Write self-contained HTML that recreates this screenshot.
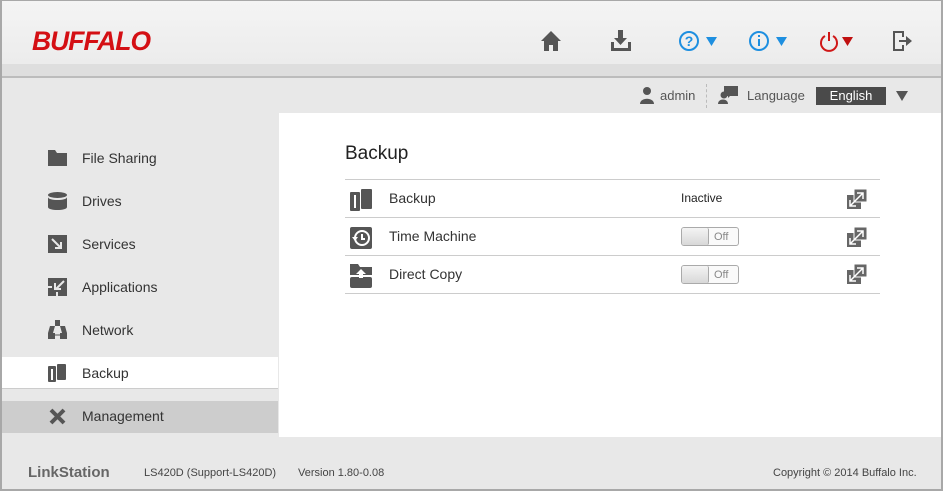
<!DOCTYPE html>
<html><head><style>
*{margin:0;padding:0;box-sizing:border-box}
body{width:943px;height:491px;overflow:hidden;font-family:"Liberation Sans",sans-serif;background:#e8e8e8;position:relative}
.frame{position:absolute;inset:0;border:2px solid #a8a8a8;border-top:1px solid #a8a8a8;pointer-events:none;z-index:9}
.hdr{position:absolute;left:0;top:0;width:943px;height:64px;background:linear-gradient(#f4f4f4,#ececec)}
.band{position:absolute;left:0;top:64px;width:943px;height:14px;background:#dedede;border-bottom:2px solid #bcbcbc}
.logo{position:absolute;left:32px;top:26px;color:#d40f14;font-weight:bold;font-style:italic;font-size:27px;letter-spacing:-1px;transform:scaleX(.98);transform-origin:left;font-family:"Liberation Sans Narrow","Liberation Sans",sans-serif}
.ic{position:absolute;top:30px}
.t{position:absolute;font-size:14px;color:#333}
.side{position:absolute;left:2px;width:276px;height:32px}
.content{position:absolute;left:279px;top:113px;width:662px;height:324px;background:#fff}
.row{position:absolute;left:345px;width:535px;border-top:1px solid #ccc}
.tog{position:absolute;left:681px;width:58px;height:19px;border:1px solid #aaa;border-radius:3px;background:#fafafa;font-size:11px;color:#888}
.tog i{position:absolute;left:0;top:0;width:27px;height:17px;background:linear-gradient(#f4f4f4,#d8d8d8);border-right:1px solid #aaa;border-radius:2px}
.tog span{position:absolute;left:32px;top:3px}
.ext{position:absolute;left:847px}
.f{position:absolute;top:467px;font-size:11px;color:#444}
</style></head><body>
<div class="hdr"></div><div class="band"></div>
<div class="logo">BUFFALO</div>
<svg class="ic" style="left:540px" width="22" height="22" viewBox="0 0 22 22"><path d="M11 1L1 11h3v10h5v-6h4v6h5V11h3z" fill="#555"/></svg>
<svg class="ic" style="left:609px" width="24" height="22" viewBox="0 0 24 22"><path d="M9 0h5v8h4l-6.5 7L5 8h4z" fill="#555"/><path d="M2 12v9h20v-9h-3v6H5v-6z" fill="#555"/></svg>
<svg class="ic" style="left:679px" width="40" height="22" viewBox="0 0 40 22"><circle cx="10" cy="11" r="9" fill="none" stroke="#1e8fe0" stroke-width="2"/><text x="10" y="16" font-size="14" text-anchor="middle" fill="#1e8fe0" font-family="Liberation Sans" font-weight="bold">?</text><path d="M27 7h11l-5.5 9z" fill="#1e8fe0"/></svg>
<svg class="ic" style="left:749px" width="40" height="22" viewBox="0 0 40 22"><circle cx="10" cy="11" r="9" fill="none" stroke="#1e8fe0" stroke-width="2"/><rect x="9" y="9" width="2" height="7" fill="#1e8fe0"/><rect x="9" y="5" width="2" height="2" fill="#1e8fe0"/><path d="M27 7h11l-5.5 9z" fill="#1e8fe0"/></svg>
<svg class="ic" style="left:819px" width="40" height="22" viewBox="0 0 40 22"><path d="M6 6a8 8 0 1 0 8 0" fill="none" stroke="#d01818" stroke-width="2"/><rect x="9" y="2" width="2" height="9" fill="#d01818"/><path d="M23 7h11l-5.5 9z" fill="#c01010"/></svg>
<svg class="ic" style="left:891px" width="22" height="22" viewBox="0 0 22 22"><path d="M2 1h11v6h-2V3H4v16h7v-4h2v6H2z" fill="#555"/><path d="M8 10h7V6l6 5-6 5v-4H8z" fill="#555"/></svg>
<svg style="position:absolute;left:639px;top:86px" width="16" height="18"><circle cx="8" cy="5" r="4" fill="#555"/><path d="M1 18c0-7 14-7 14 0z" fill="#555"/></svg>
<div class="t" style="left:660px;top:88px;font-size:13px;color:#555">admin</div>
<div style="position:absolute;left:706px;top:84px;height:24px;border-left:1px dashed #bbb"></div>
<svg style="position:absolute;left:718px;top:86px" width="20" height="18"><path d="M6 0h14v10H12l-2 2V10H6z" fill="#555"/><circle cx="6" cy="9" r="3.5" fill="#555"/><path d="M0 18c0-6 10-6 10 0z" fill="#555"/></svg>
<div class="t" style="left:747px;top:88px;font-size:13px;color:#555">Language</div>
<div style="position:absolute;left:816px;top:87px;width:70px;height:18px;background:#4a4a4a;color:#fff;font-size:13px;text-align:center;line-height:18px">English</div>
<svg style="position:absolute;left:896px;top:91px" width="12" height="10"><path d="M0 0h12L6 10z" fill="#555"/></svg>

<div class="side" style="top:357px;background:#fff;border-bottom:1px solid #ccc"></div>
<div class="side" style="top:401px;background:#cdcdcd"></div>
<div class="content"></div>

<svg style="position:absolute;left:48px;top:150px" width="19" height="16"><path d="M0 0h7l2 3h10v13H0z" fill="#555"/></svg>
<div class="t" style="left:82px;top:150px">File Sharing</div>
<svg style="position:absolute;left:48px;top:192px" width="19" height="18"><ellipse cx="9.5" cy="3" rx="9.5" ry="3" fill="#555"/><path d="M0 5c0 4 19 4 19 0v10c0 4-19 4-19 0z" fill="#555"/></svg>
<div class="t" style="left:82px;top:193px">Drives</div>
<svg style="position:absolute;left:48px;top:235px" width="19" height="18"><rect width="19" height="18" fill="#555"/><path d="M4 4l9 9M7 13h6V7" stroke="#e8e8e8" stroke-width="2" fill="none"/></svg>
<div class="t" style="left:82px;top:236px">Services</div>
<svg style="position:absolute;left:48px;top:278px" width="19" height="18"><rect width="19" height="18" fill="#555"/><path d="M16 3l-8 8M7 5v6h6M0 9h4M9 18v-4" stroke="#e8e8e8" stroke-width="2" fill="none"/></svg>
<div class="t" style="left:82px;top:279px">Applications</div>
<svg style="position:absolute;left:48px;top:320px" width="19" height="19"><path d="M7 0h5v6h-5zM2 6h5l-2 7H0zM12 6h5l2 7h-5zM0 13h7v6H0zM12 13h7v6h-7z" fill="#555"/><path d="M7 15h5" stroke="#555"/></svg>
<div class="t" style="left:82px;top:322px">Network</div>
<svg style="position:absolute;left:48px;top:364px" width="18" height="18"><rect x="0" y="2" width="8" height="16" rx="1" fill="#555"/><rect x="9" y="0" width="9" height="16" rx="1" fill="#555"/><rect x="3" y="5" width="2" height="11" fill="#fff"/></svg>
<div class="t" style="left:82px;top:365px">Backup</div>
<svg style="position:absolute;left:48px;top:407px" width="19" height="19"><path d="M3 3l13 13M16 3L3 16" stroke="#555" stroke-width="4"/></svg>
<div class="t" style="left:82px;top:408px">Management</div>

<div class="t" style="left:345px;top:143px;font-size:19px;color:#222">Backup</div>
<div class="row" style="top:179px"></div><div class="row" style="top:217px"></div><div class="row" style="top:255px"></div><div class="row" style="top:293px"></div>
<svg style="position:absolute;left:350px;top:189px" width="22" height="22"><rect x="0" y="3" width="10" height="19" rx="1" fill="#555"/><rect x="11" y="0" width="11" height="20" rx="1" fill="#555"/><rect x="4" y="6" width="2" height="13" fill="#fff"/></svg>
<div class="t" style="left:389px;top:190px">Backup</div>
<div class="t" style="left:681px;top:191px;font-size:12px;color:#222">Inactive</div>
<svg style="position:absolute;left:350px;top:227px" width="22" height="22"><rect width="22" height="22" rx="2" fill="#555"/><circle cx="12" cy="11" r="7" fill="none" stroke="#fff" stroke-width="2"/><path d="M12 7v5h3" stroke="#fff" stroke-width="2" fill="none"/><path d="M2 10l3 4 3-4z" fill="#fff"/></svg>
<div class="t" style="left:389px;top:228px">Time Machine</div>
<div class="tog" style="top:227px"><i></i><span>Off</span></div>
<svg style="position:absolute;left:350px;top:264px" width="22" height="24"><path d="M0 0h8l2 3h12v8H0z" fill="#555"/><rect x="0" y="13" width="22" height="11" rx="2" fill="#555"/><path d="M11 5l-5 5h3v4h4v-4h3z" fill="#fff"/></svg>
<div class="t" style="left:389px;top:266px">Direct Copy</div>
<div class="tog" style="top:265px"><i></i><span>Off</span></div>
<svg class="ext" style="top:189px" width="20" height="20"><rect x="0" y="6" width="14" height="14" fill="#666"/><rect x="7" y="0" width="13" height="13" fill="#666" stroke="#fff"/><path d="M3 17l13-13M10 4h6v6M3 11v6h6" stroke="#fff" stroke-width="1.5" fill="none"/></svg>
<svg class="ext" style="top:227px" width="20" height="20"><rect x="0" y="6" width="14" height="14" fill="#666"/><rect x="7" y="0" width="13" height="13" fill="#666" stroke="#fff"/><path d="M3 17l13-13M10 4h6v6M3 11v6h6" stroke="#fff" stroke-width="1.5" fill="none"/></svg>
<svg class="ext" style="top:264px" width="20" height="20"><rect x="0" y="6" width="14" height="14" fill="#666"/><rect x="7" y="0" width="13" height="13" fill="#666" stroke="#fff"/><path d="M3 17l13-13M10 4h6v6M3 11v6h6" stroke="#fff" stroke-width="1.5" fill="none"/></svg>

<div class="f" style="left:28px;top:464px;font-size:15px;font-weight:bold;color:#666">LinkStation</div>
<div class="f" style="left:144px">LS420D (Support-LS420D)</div>
<div class="f" style="left:298px">Version 1.80-0.08</div>
<div class="f" style="left:773px">Copyright © 2014 Buffalo Inc.</div>
<div class="frame"></div>
</body></html>
